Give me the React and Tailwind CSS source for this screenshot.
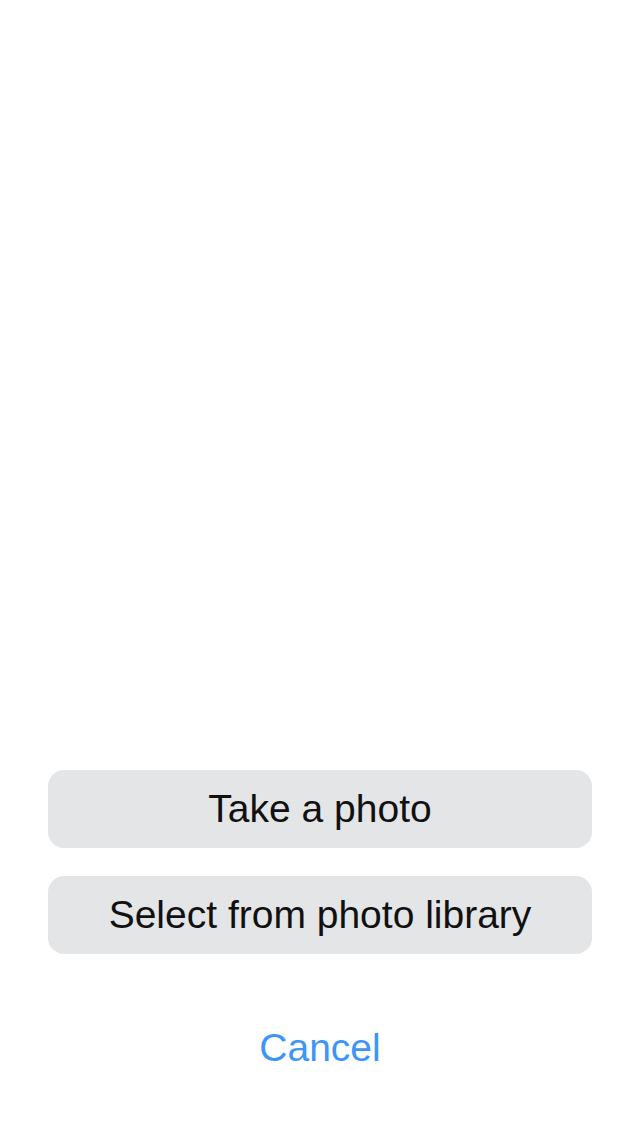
export default function App() {
  return (
    <div className="flex h-[1136px] w-[640px] flex-col justify-end bg-white pb-[49px]" style={{ fontFamily: '"Liberation Sans", Arial, sans-serif' }}>
      <div className="flex flex-col gap-7 px-12">
        <button className="flex h-[78px] items-center justify-center rounded-2xl bg-[#e4e5e7] text-[39px] font-light text-[#111]">
          Take a photo
        </button>
        <button className="flex h-[78px] items-center justify-center rounded-2xl bg-[#e4e5e7] text-[39px] font-light text-[#111]">
          Select from photo library
        </button>
      </div>
      <div className="mt-[55px] flex h-[78px] items-center justify-center text-[39px] font-light text-[#3d96f5]">
        Cancel
      </div>
    </div>
  );
}
